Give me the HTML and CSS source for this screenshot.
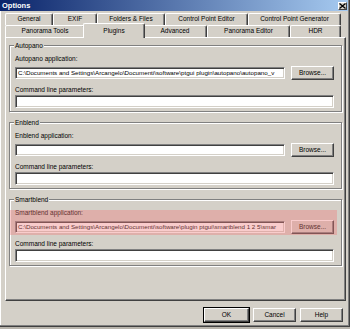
FILE: index.html
```html
<!DOCTYPE html>
<html lang="en">
<head>
  <meta charset="UTF-8" />
  <title>Options</title>
  <link rel="stylesheet" href="styles.css">
</head>
<body>
  <div class="window">
    <div class="titlebar">
      <span class="title">Options</span>
      <span class="close">
        <svg width="7" height="6" viewBox="0 0 7 6"><path d="M0.5 0.5 L6.5 5.5 M6.5 0.5 L0.5 5.5" stroke="#000" stroke-width="1.3"/></svg>
      </span>
    </div>

    <div class="main">
      <div class="tabs">
        <div class="tabrow row-back">
          <div class="tab">General</div>
          <div class="tab">EXIF</div>
          <div class="tab">Folders &amp; Files</div>
          <div class="tab">Control Point Editor</div>
          <div class="tab">Control Point Generator</div>
        </div>
        <div class="tabrow row-front">
          <div class="tab">Panorama Tools</div>
          <div class="tab active">Plugins</div>
          <div class="tab">Advanced</div>
          <div class="tab">Panorama Editor</div>
          <div class="tab">HDR</div>
        </div>
      </div>

      <div class="panel">
        <div class="group">
          <div class="group-title">Autopano</div>
          <div class="label">Autopano application:</div>
          <div class="path-row">
            <div class="input path">C:\Documents and Settings\Arcangelo\Documenti\software\ptgui plugin\autopano\autopano_v</div>
            <div class="btn">Browse...</div>
          </div>
          <div class="label second">Command line parameters:</div>
          <div class="input wide"></div>
        </div>

        <div class="group">
          <div class="group-title">Enblend</div>
          <div class="label">Enblend application:</div>
          <div class="path-row">
            <div class="input path"></div>
            <div class="btn">Browse...</div>
          </div>
          <div class="label second">Command line parameters:</div>
          <div class="input wide"></div>
        </div>

        <div class="group">
          <div class="group-title">Smartblend</div>
          <div class="highlight">
            <div class="label">Smartblend application:</div>
            <div class="path-row">
              <div class="input path">C:\Documents and Settings\Arcangelo\Documenti\software\plugin ptgui\smartblend 1 2 5\smar</div>
              <div class="btn">Browse...</div>
            </div>
          </div>
          <div class="label second">Command line parameters:</div>
          <div class="input wide"></div>
        </div>
      </div>

      <div class="buttons">
        <div class="btn dialog default">OK</div>
        <div class="btn dialog">Cancel</div>
        <div class="btn dialog">Help</div>
      </div>
    </div>
  </div>
</body>
</html>
```

FILE: styles.css
```css
body {
  margin: 0;
  background: #b8b4ac;
  font-family: "Liberation Sans", Arial, sans-serif;
  font-size: 6.5px;
  color: #000;
}
.window {
  width: 350px;
  height: 327px;
  box-sizing: border-box;
  background: #d4d0c8;
  border-right: 1px solid #404040;
  border-bottom: 1px solid #404040;
  box-shadow: inset -1px -1px #808080, inset 1px 0 #fff;
}
.titlebar {
  height: 11px;
  margin-right: 1px;
  padding: 0 1px 0 2px;
  display: flex;
  align-items: center;
  justify-content: space-between;
  background: linear-gradient(to right, #0a246a, #a6caf0);
}
.title {
  color: #fff;
  font-weight: bold;
  font-size: 7.5px;
}
.close {
  width: 9px;
  height: 8px;
  box-sizing: border-box;
  display: flex;
  align-items: center;
  justify-content: center;
  background: #d4d0c8;
  border: 1px solid;
  border-color: #fff #404040 #404040 #fff;
}
.main {
  padding: 2px 3px 0 5px;
}
.tabrow {
  display: grid;
  height: 12px;
}
.row-back {
  grid-template-columns: 48px 44px 68px 83px 93px;
}
.row-front {
  grid-template-columns: 80px 58px 64px 83px 51px;
}
.tab {
  box-sizing: border-box;
  border-top: 1px solid #fff;
  border-left: 1px solid #fff;
  border-right: 1px solid #404040;
  border-radius: 2px 2px 0 0;
  box-shadow: inset -1px 0 #808080;
  background: #d4d0c8;
  text-align: center;
  line-height: 10px;
  white-space: nowrap;
}
.tab.active {
  position: relative;
  z-index: 2;
  margin: -2px -2px -1px -2px;
  line-height: 13px;
}
.panel {
  height: 264px;
  box-sizing: border-box;
  border: 1px solid;
  border-color: #fff #404040 #404040 #fff;
  box-shadow: inset -1px -1px #808080;
  padding: 7px 3px 0 3px;
}
.group {
  border: 1px solid #808080;
  box-shadow: 1px 1px 0 #fff, inset 1px 1px 0 #fff;
  padding: 0 7px 3px 5px;
  margin-bottom: 10px;
}
.group-title {
  width: max-content;
  margin: -4px 0 0 -1px;
  padding: 0 1px;
  line-height: 8px;
  background: #d4d0c8;
}
.label {
  line-height: 8px;
  margin-top: 5px;
}
.label.second {
  margin-top: 6px;
}
.path-row {
  display: flex;
  align-items: center;
  gap: 6px;
  height: 14px;
  margin-top: 3px;
}
.input {
  box-sizing: border-box;
  height: 12px;
  background: #fff;
  border: 1px solid;
  border-color: #808080 #fff #fff #808080;
  box-shadow: inset 1px 1px #404040, inset -1px -1px #d4d0c8;
  padding: 0 1px 0 2px;
  font-size: 6.2px;
  line-height: 10px;
  white-space: nowrap;
  overflow: hidden;
}
.input.path {
  flex: 1;
}
.input.wide {
  height: 13px;
  margin-top: 1px;
}
.btn {
  box-sizing: border-box;
  width: 43px;
  height: 14px;
  flex-shrink: 0;
  border: 1px solid;
  border-color: #fff #404040 #404040 #fff;
  box-shadow: inset -1px -1px #808080;
  background: #d4d0c8;
  text-align: center;
  line-height: 12px;
}
.highlight {
  position: relative;
}
.highlight::after {
  content: "";
  position: absolute;
  top: 1px;
  bottom: -1px;
  left: -5px;
  right: -3px;
  background: rgba(240, 120, 120, 0.38);
}
.buttons {
  display: flex;
  justify-content: flex-end;
  gap: 4px;
  padding-right: 3px;
  margin-top: 7px;
}
.btn.dialog {
  width: 43px;
}
.btn.default {
  width: 45px;
  outline: 1px solid #000;
  outline-offset: 0;
}
```
